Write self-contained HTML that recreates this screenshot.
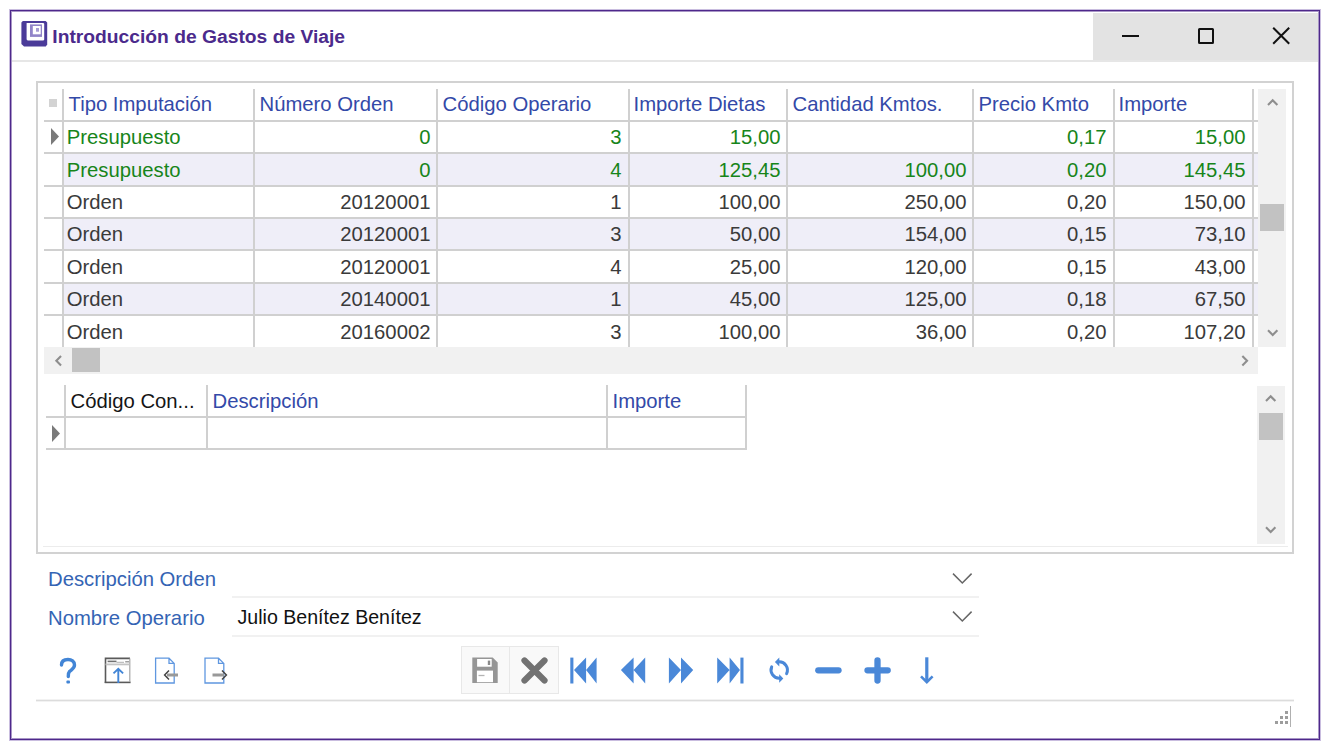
<!DOCTYPE html>
<html><head><meta charset="utf-8"><style>
html,body{margin:0;padding:0;background:#fff;width:1327px;height:745px;overflow:hidden;position:relative}
.t{position:absolute;font-family:"Liberation Sans",sans-serif;white-space:nowrap}
.r{position:absolute;display:block}
</style></head><body>
<div class="r" style="left:9px;top:9px;width:1312px;height:732px;box-sizing:border-box;border:1px solid #c9bddf"></div>
<div class="r" style="left:10px;top:10px;width:1310px;height:730px;box-sizing:border-box;border:1px solid #4e288b"></div>
<div class="r" style="left:11px;top:11px;width:1308px;height:728px;box-sizing:border-box;border:1px solid #a896c6"></div>
<div class="r" style="left:1093px;top:13px;width:225px;height:48px;background:#e3e3e3;"></div>
<div class="r" style="left:12px;top:60px;width:1306px;height:2px;background:#e6e6e6;"></div>
<svg class="r" style="left:18px;top:18px" width="32" height="32" viewBox="0 0 32 32">
<path d="M4.8 3.0 H27.6 L29.2 4.6 V26.6 L27.8 28.6 H6.0 L3.4 26.0 V4.4 Z" fill="#4b3b99"/>
<path d="M8.6 5.0 H25.4 L26.2 5.8 V21.7 L25.4 22.5 H9.6 L8.6 21.5 Z" fill="#fff"/>
<rect x="12" y="6.4" width="12" height="12.5" fill="#9184c8"/>
<rect x="14.8" y="8" width="7.9" height="8.3" fill="#fff"/>
<rect x="18" y="10" width="3" height="3.7" fill="#a69cd3"/>
</svg>
<div class="t" style="left:52.30px;top:26.90px;font-size:19.25px;line-height:19.25px;color:#4b2a8c;font-weight:bold;">Introducción de Gastos de Viaje</div>
<div class="r" style="left:1122px;top:35px;width:17px;height:2px;background:#111;"></div>
<div class="r" style="left:1198px;top:27.5px;width:16px;height:16px;box-sizing:border-box;border:2px solid #111;border-radius:1.5px"></div>
<svg class="r" style="left:1270px;top:25px" width="22" height="22" viewBox="0 0 22 22"><path d="M3.2 2.8 L19.2 18.8 M19.2 2.8 L3.2 18.8" stroke="#111" stroke-width="2"/></svg>
<div class="r" style="left:36px;top:81px;width:1258px;height:473px;box-sizing:border-box;border:2px solid #d2d2d2"></div>
<div class="r" style="left:63px;top:154px;width:1195px;height:31px;background:#efeef8;"></div>
<div class="r" style="left:63px;top:219px;width:1195px;height:30px;background:#efeef8;"></div>
<div class="r" style="left:63px;top:284px;width:1195px;height:30px;background:#efeef8;"></div>
<div class="r" style="left:62px;top:89px;width:2px;height:258px;background:#d0d0d0;"></div>
<div class="r" style="left:253px;top:89px;width:2px;height:258px;background:#d0d0d0;"></div>
<div class="r" style="left:436px;top:89px;width:2px;height:258px;background:#d0d0d0;"></div>
<div class="r" style="left:628px;top:89px;width:2px;height:258px;background:#d0d0d0;"></div>
<div class="r" style="left:786px;top:89px;width:2px;height:258px;background:#d0d0d0;"></div>
<div class="r" style="left:972px;top:89px;width:2px;height:258px;background:#d0d0d0;"></div>
<div class="r" style="left:1113px;top:89px;width:2px;height:258px;background:#d0d0d0;"></div>
<div class="r" style="left:1252px;top:89px;width:2px;height:258px;background:#d0d0d0;"></div>
<div class="r" style="left:44px;top:120px;width:1214px;height:2px;background:#d0d0d0;"></div>
<div class="r" style="left:44px;top:152px;width:1214px;height:2px;background:#d0d0d0;"></div>
<div class="r" style="left:44px;top:185px;width:1214px;height:2px;background:#d0d0d0;"></div>
<div class="r" style="left:44px;top:217px;width:1214px;height:2px;background:#d0d0d0;"></div>
<div class="r" style="left:44px;top:249px;width:1214px;height:2px;background:#d0d0d0;"></div>
<div class="r" style="left:44px;top:282px;width:1214px;height:2px;background:#d0d0d0;"></div>
<div class="r" style="left:44px;top:314px;width:1214px;height:2px;background:#d0d0d0;"></div>
<div class="r" style="left:49px;top:99px;width:8px;height:8px;background:#d3d3d3;"></div>
<svg class="r" style="left:50px;top:127px" width="10" height="20" viewBox="0 0 10 20"><path d="M1 1 L9 9.5 L1 18 Z" fill="#7a7a7a"/></svg>
<div class="t" style="left:68.50px;top:94.12px;font-size:20.3px;line-height:20.3px;color:#3349a8;font-weight:normal;">Tipo Imputación</div>
<div class="t" style="left:259.50px;top:94.12px;font-size:20.3px;line-height:20.3px;color:#3349a8;font-weight:normal;">Número Orden</div>
<div class="t" style="left:442.50px;top:94.12px;font-size:20.3px;line-height:20.3px;color:#3349a8;font-weight:normal;">Código Operario</div>
<div class="t" style="left:633.50px;top:94.12px;font-size:20.3px;line-height:20.3px;color:#3349a8;font-weight:normal;">Importe Dietas</div>
<div class="t" style="left:792.50px;top:94.12px;font-size:20.3px;line-height:20.3px;color:#3349a8;font-weight:normal;">Cantidad Kmtos.</div>
<div class="t" style="left:978.50px;top:94.12px;font-size:20.3px;line-height:20.3px;color:#3349a8;font-weight:normal;">Precio Kmto</div>
<div class="t" style="left:1118.50px;top:94.12px;font-size:20.3px;line-height:20.3px;color:#3349a8;font-weight:normal;">Importe</div>
<div class="t" style="left:66.70px;top:127.22px;font-size:20.3px;line-height:20.3px;color:#17851a;font-weight:normal;">Presupuesto</div>
<div class="t" style="right:896.50px;top:127.22px;font-size:20.3px;line-height:20.3px;color:#17851a;font-weight:normal;text-align:right;">0</div>
<div class="t" style="right:705.50px;top:127.22px;font-size:20.3px;line-height:20.3px;color:#17851a;font-weight:normal;text-align:right;">3</div>
<div class="t" style="right:546.50px;top:127.22px;font-size:20.3px;line-height:20.3px;color:#17851a;font-weight:normal;text-align:right;">15,00</div>
<div class="t" style="right:220.50px;top:127.22px;font-size:20.3px;line-height:20.3px;color:#17851a;font-weight:normal;text-align:right;">0,17</div>
<div class="t" style="right:81.50px;top:127.22px;font-size:20.3px;line-height:20.3px;color:#17851a;font-weight:normal;text-align:right;">15,00</div>
<div class="t" style="left:66.70px;top:159.62px;font-size:20.3px;line-height:20.3px;color:#17851a;font-weight:normal;">Presupuesto</div>
<div class="t" style="right:896.50px;top:159.62px;font-size:20.3px;line-height:20.3px;color:#17851a;font-weight:normal;text-align:right;">0</div>
<div class="t" style="right:705.50px;top:159.62px;font-size:20.3px;line-height:20.3px;color:#17851a;font-weight:normal;text-align:right;">4</div>
<div class="t" style="right:546.50px;top:159.62px;font-size:20.3px;line-height:20.3px;color:#17851a;font-weight:normal;text-align:right;">125,45</div>
<div class="t" style="right:360.50px;top:159.62px;font-size:20.3px;line-height:20.3px;color:#17851a;font-weight:normal;text-align:right;">100,00</div>
<div class="t" style="right:220.50px;top:159.62px;font-size:20.3px;line-height:20.3px;color:#17851a;font-weight:normal;text-align:right;">0,20</div>
<div class="t" style="right:81.50px;top:159.62px;font-size:20.3px;line-height:20.3px;color:#17851a;font-weight:normal;text-align:right;">145,45</div>
<div class="t" style="left:66.70px;top:192.02px;font-size:20.3px;line-height:20.3px;color:#3a3a3a;font-weight:normal;">Orden</div>
<div class="t" style="right:896.50px;top:192.02px;font-size:20.3px;line-height:20.3px;color:#3a3a3a;font-weight:normal;text-align:right;">20120001</div>
<div class="t" style="right:705.50px;top:192.02px;font-size:20.3px;line-height:20.3px;color:#3a3a3a;font-weight:normal;text-align:right;">1</div>
<div class="t" style="right:546.50px;top:192.02px;font-size:20.3px;line-height:20.3px;color:#3a3a3a;font-weight:normal;text-align:right;">100,00</div>
<div class="t" style="right:360.50px;top:192.02px;font-size:20.3px;line-height:20.3px;color:#3a3a3a;font-weight:normal;text-align:right;">250,00</div>
<div class="t" style="right:220.50px;top:192.02px;font-size:20.3px;line-height:20.3px;color:#3a3a3a;font-weight:normal;text-align:right;">0,20</div>
<div class="t" style="right:81.50px;top:192.02px;font-size:20.3px;line-height:20.3px;color:#3a3a3a;font-weight:normal;text-align:right;">150,00</div>
<div class="t" style="left:66.70px;top:224.42px;font-size:20.3px;line-height:20.3px;color:#3a3a3a;font-weight:normal;">Orden</div>
<div class="t" style="right:896.50px;top:224.42px;font-size:20.3px;line-height:20.3px;color:#3a3a3a;font-weight:normal;text-align:right;">20120001</div>
<div class="t" style="right:705.50px;top:224.42px;font-size:20.3px;line-height:20.3px;color:#3a3a3a;font-weight:normal;text-align:right;">3</div>
<div class="t" style="right:546.50px;top:224.42px;font-size:20.3px;line-height:20.3px;color:#3a3a3a;font-weight:normal;text-align:right;">50,00</div>
<div class="t" style="right:360.50px;top:224.42px;font-size:20.3px;line-height:20.3px;color:#3a3a3a;font-weight:normal;text-align:right;">154,00</div>
<div class="t" style="right:220.50px;top:224.42px;font-size:20.3px;line-height:20.3px;color:#3a3a3a;font-weight:normal;text-align:right;">0,15</div>
<div class="t" style="right:81.50px;top:224.42px;font-size:20.3px;line-height:20.3px;color:#3a3a3a;font-weight:normal;text-align:right;">73,10</div>
<div class="t" style="left:66.70px;top:256.82px;font-size:20.3px;line-height:20.3px;color:#3a3a3a;font-weight:normal;">Orden</div>
<div class="t" style="right:896.50px;top:256.82px;font-size:20.3px;line-height:20.3px;color:#3a3a3a;font-weight:normal;text-align:right;">20120001</div>
<div class="t" style="right:705.50px;top:256.82px;font-size:20.3px;line-height:20.3px;color:#3a3a3a;font-weight:normal;text-align:right;">4</div>
<div class="t" style="right:546.50px;top:256.82px;font-size:20.3px;line-height:20.3px;color:#3a3a3a;font-weight:normal;text-align:right;">25,00</div>
<div class="t" style="right:360.50px;top:256.82px;font-size:20.3px;line-height:20.3px;color:#3a3a3a;font-weight:normal;text-align:right;">120,00</div>
<div class="t" style="right:220.50px;top:256.82px;font-size:20.3px;line-height:20.3px;color:#3a3a3a;font-weight:normal;text-align:right;">0,15</div>
<div class="t" style="right:81.50px;top:256.82px;font-size:20.3px;line-height:20.3px;color:#3a3a3a;font-weight:normal;text-align:right;">43,00</div>
<div class="t" style="left:66.70px;top:289.22px;font-size:20.3px;line-height:20.3px;color:#3a3a3a;font-weight:normal;">Orden</div>
<div class="t" style="right:896.50px;top:289.22px;font-size:20.3px;line-height:20.3px;color:#3a3a3a;font-weight:normal;text-align:right;">20140001</div>
<div class="t" style="right:705.50px;top:289.22px;font-size:20.3px;line-height:20.3px;color:#3a3a3a;font-weight:normal;text-align:right;">1</div>
<div class="t" style="right:546.50px;top:289.22px;font-size:20.3px;line-height:20.3px;color:#3a3a3a;font-weight:normal;text-align:right;">45,00</div>
<div class="t" style="right:360.50px;top:289.22px;font-size:20.3px;line-height:20.3px;color:#3a3a3a;font-weight:normal;text-align:right;">125,00</div>
<div class="t" style="right:220.50px;top:289.22px;font-size:20.3px;line-height:20.3px;color:#3a3a3a;font-weight:normal;text-align:right;">0,18</div>
<div class="t" style="right:81.50px;top:289.22px;font-size:20.3px;line-height:20.3px;color:#3a3a3a;font-weight:normal;text-align:right;">67,50</div>
<div class="t" style="left:66.70px;top:321.62px;font-size:20.3px;line-height:20.3px;color:#3a3a3a;font-weight:normal;">Orden</div>
<div class="t" style="right:896.50px;top:321.62px;font-size:20.3px;line-height:20.3px;color:#3a3a3a;font-weight:normal;text-align:right;">20160002</div>
<div class="t" style="right:705.50px;top:321.62px;font-size:20.3px;line-height:20.3px;color:#3a3a3a;font-weight:normal;text-align:right;">3</div>
<div class="t" style="right:546.50px;top:321.62px;font-size:20.3px;line-height:20.3px;color:#3a3a3a;font-weight:normal;text-align:right;">100,00</div>
<div class="t" style="right:360.50px;top:321.62px;font-size:20.3px;line-height:20.3px;color:#3a3a3a;font-weight:normal;text-align:right;">36,00</div>
<div class="t" style="right:220.50px;top:321.62px;font-size:20.3px;line-height:20.3px;color:#3a3a3a;font-weight:normal;text-align:right;">0,20</div>
<div class="t" style="right:81.50px;top:321.62px;font-size:20.3px;line-height:20.3px;color:#3a3a3a;font-weight:normal;text-align:right;">107,20</div>
<div class="r" style="left:1258px;top:89px;width:28px;height:258px;background:#f1f1f1;"></div>
<div class="r" style="left:1260px;top:204px;width:24px;height:27px;background:#c2c2c2;"></div>
<div class="r" style="left:44px;top:347px;width:1214px;height:27px;background:#f1f1f1;"></div>
<div class="r" style="left:72px;top:348px;width:28px;height:24px;background:#c2c2c2;"></div>
<svg class="r" style="left:1264.5px;top:95.1px" width="15.4" height="15.4" viewBox="-7.7 -7.7 15.4 15.4"><path d="M-4.7 2.35 L0 -2.35 L4.7 2.35" fill="none" stroke="#8e8e8e" stroke-width="2.1"/></svg>
<svg class="r" style="left:1264.6px;top:324.8px" width="15.4" height="15.4" viewBox="-7.7 -7.7 15.4 15.4"><path d="M-4.7 -2.35 L0 2.35 L4.7 -2.35" fill="none" stroke="#8e8e8e" stroke-width="2.1"/></svg>
<svg class="r" style="left:50.5px;top:352.8px" width="15.4" height="15.4" viewBox="-7.7 -7.7 15.4 15.4"><path d="M2.35 -4.7 L-2.35 0 L2.35 4.7" fill="none" stroke="#8e8e8e" stroke-width="2.1"/></svg>
<svg class="r" style="left:1236.8px;top:352.8px" width="15.4" height="15.4" viewBox="-7.7 -7.7 15.4 15.4"><path d="M-2.35 -4.7 L2.35 0 L-2.35 4.7" fill="none" stroke="#8e8e8e" stroke-width="2.1"/></svg>
<div class="r" style="left:64px;top:385px;width:2px;height:64px;background:#d0d0d0;"></div>
<div class="r" style="left:206px;top:385px;width:2px;height:64px;background:#d0d0d0;"></div>
<div class="r" style="left:606px;top:385px;width:2px;height:64px;background:#d0d0d0;"></div>
<div class="r" style="left:745px;top:385px;width:2px;height:64px;background:#d0d0d0;"></div>
<div class="r" style="left:46px;top:416px;width:701px;height:2px;background:#d0d0d0;"></div>
<div class="r" style="left:46px;top:448px;width:701px;height:2px;background:#d0d0d0;"></div>
<svg class="r" style="left:51px;top:424px" width="10" height="20" viewBox="0 0 10 20"><path d="M1 1 L9 9.5 L1 18 Z" fill="#7a7a7a"/></svg>
<div class="t" style="left:70.50px;top:390.82px;font-size:20.3px;line-height:20.3px;color:#151515;font-weight:normal;">Código Con...</div>
<div class="t" style="left:212.50px;top:390.82px;font-size:20.3px;line-height:20.3px;color:#3349a8;font-weight:normal;">Descripción</div>
<div class="t" style="left:612.50px;top:390.82px;font-size:20.3px;line-height:20.3px;color:#3349a8;font-weight:normal;">Importe</div>
<div class="r" style="left:1257px;top:386px;width:28px;height:158px;background:#f1f1f1;"></div>
<div class="r" style="left:1259px;top:413px;width:24px;height:27px;background:#c2c2c2;"></div>
<svg class="r" style="left:1263.3px;top:391.3px" width="15.4" height="15.4" viewBox="-7.7 -7.7 15.4 15.4"><path d="M-4.7 2.35 L0 -2.35 L4.7 2.35" fill="none" stroke="#8e8e8e" stroke-width="2.1"/></svg>
<svg class="r" style="left:1263.3px;top:522.3px" width="15.4" height="15.4" viewBox="-7.7 -7.7 15.4 15.4"><path d="M-4.7 -2.35 L0 2.35 L4.7 -2.35" fill="none" stroke="#8e8e8e" stroke-width="2.1"/></svg>
<div class="r" style="left:43px;top:546px;width:1245px;height:1px;background:#ececec;"></div>
<div class="t" style="left:48.00px;top:568.82px;font-size:20.3px;line-height:20.3px;color:#3464b4;font-weight:normal;">Descripción Orden</div>
<div class="t" style="left:48.00px;top:607.82px;font-size:20.3px;line-height:20.3px;color:#3464b4;font-weight:normal;">Nombre Operario</div>
<div class="r" style="left:232px;top:596px;width:747px;height:2px;background:#f1f1f1;"></div>
<div class="r" style="left:232px;top:635px;width:747px;height:2px;background:#f1f1f1;"></div>
<div class="t" style="left:237.50px;top:608.41px;font-size:19.6px;line-height:19.6px;color:#111;font-weight:normal;">Julio Benítez Benítez</div>
<svg class="r" style="left:950.1px;top:565.7px" width="24.6" height="24.6" viewBox="-12.3 -12.3 24.6 24.6"><path d="M-9.3 -4.65 L0 4.65 L9.3 -4.65" fill="none" stroke="#666" stroke-width="1.5"/></svg>
<svg class="r" style="left:950.1px;top:604.3000000000001px" width="24.6" height="24.6" viewBox="-12.3 -12.3 24.6 24.6"><path d="M-9.3 -4.65 L0 4.65 L9.3 -4.65" fill="none" stroke="#666" stroke-width="1.5"/></svg>
<div class="r" style="left:36px;top:699px;width:1258px;height:3px;background:#f2f2f2;"></div>
<div class="r" style="left:36px;top:700px;width:1258px;height:1px;background:#dcdcdc;"></div>
<svg class="r" style="left:56px;top:656px" width="24" height="32" viewBox="0 0 24 32"><path d="M5.5 9 C5.5 5 8.5 3.5 12 3.5 C15.5 3.5 18.5 5.5 18.5 9 C18.5 12.5 15.5 13.5 13.5 15.5 C12.3 16.7 12.3 18 12.3 20.5" fill="none" stroke="#4285d6" stroke-width="3.4" stroke-linecap="round"/><rect x="10.4" y="24.4" width="3.6" height="3.2" rx="1" fill="#4285d6"/></svg>
<svg class="r" style="left:104px;top:657px" width="28" height="28" viewBox="0 0 28 28"><path d="M1.5 26 V1.4 H26" fill="none" stroke="#5a5a5a" stroke-width="1.6"/><path d="M0.7 25.4 H26.6" stroke="#5a5a5a" stroke-width="1.6"/><path d="M25.8 1.4 V25" stroke="#a5a5a5" stroke-width="1.2"/><path d="M3.6 4.4 H12.5" stroke="#707070" stroke-width="1.6"/><path d="M12.5 5.3 H20" stroke="#9a9a9a" stroke-width="0.8"/><path d="M21.2 4.8 H25" stroke="#8a8a8a" stroke-width="1.2"/><path d="M1.5 7.4 H25.5" stroke="#c4c4c4" stroke-width="1.8"/><path d="M14.3 26 V12.3 M9.5 16.4 L14.3 11.8 L19.1 16.4" fill="none" stroke="#4285d6" stroke-width="1.9"/></svg>
<svg class="r" style="left:154px;top:657px" width="28" height="28" viewBox="0 0 28 28"><path d="M1.6 1.2 H15 L20.2 6.4 V26 H1.6 Z M15 1.2 V6.4 H20.2" fill="none" stroke="#5f97e0" stroke-width="1.3"/><path d="M13 18 H24" stroke="#999" stroke-width="3"/><path d="M15 13.5 L10.6 18 L15 22.5" fill="none" stroke="#444" stroke-width="1.5"/></svg>
<svg class="r" style="left:204px;top:657px" width="28" height="28" viewBox="0 0 28 28"><path d="M1.0 1.2 H14.5 L19.8 6.4 V26 H1.0 Z M14.5 1.2 V6.4 H19.8" fill="none" stroke="#5f97e0" stroke-width="1.3"/><path d="M8.5 18 H20" stroke="#999" stroke-width="3"/><path d="M18 13.5 L22.4 18 L18 22.5" fill="none" stroke="#444" stroke-width="1.5"/></svg>
<div class="r" style="left:461px;top:646px;width:49px;height:48px;box-sizing:border-box;background:#f9f9f9;border:1.5px solid #e8e8e8"></div>
<div class="r" style="left:509px;top:646px;width:50px;height:48px;box-sizing:border-box;background:#f9f9f9;border:1.5px solid #e8e8e8"></div>
<svg class="r" style="left:472px;top:657px" width="27" height="27" viewBox="0 0 27 27"><path d="M0.3 0.5 H20.7 L25.7 5.5 V26 H0.3 Z" fill="#969696"/><rect x="5.1" y="2.0" width="14.6" height="7.7" fill="#fff"/><rect x="4.9" y="13.6" width="16.1" height="11.6" fill="#fff"/><rect x="15.8" y="3.6" width="2.4" height="4.4" fill="#8a8a8a"/><path d="M6.5 18.5 H12.5" stroke="#b4b4b4" stroke-width="1.3"/></svg>
<svg class="r" style="left:519px;top:655px" width="31" height="31" viewBox="0 0 31 31"><path d="M5.5 5.5 L25.5 25.5 M25.5 5.5 L5.5 25.5" stroke="#727272" stroke-width="6.2" stroke-linecap="round"/></svg>
<svg class="r" style="left:570px;top:657px" width="30" height="27" viewBox="0 0 30 27"><rect x="0.3" y="0.6" width="3.1" height="25.9" fill="#4a88d8"/><path d="M4 13 L16.1 0.6 V26.5 Z M16.1 13 L26.6 0.6 V26.5 Z" fill="#4a88d8"/></svg>
<svg class="r" style="left:620px;top:657px" width="30" height="27" viewBox="0 0 30 27"><path d="M0.9 13 L13.6 0.6 V26.5 Z M13.6 13 L25.2 0.6 V26.5 Z" fill="#4a88d8"/></svg>
<svg class="r" style="left:668px;top:657px" width="30" height="27" viewBox="0 0 30 27"><path d="M0.9 0.6 V26.5 L13 13 Z M13 0.6 V26.5 L25.2 13 Z" fill="#4a88d8"/></svg>
<svg class="r" style="left:717px;top:657px" width="30" height="27" viewBox="0 0 30 27"><path d="M0.2 0.6 V26.5 L12.6 13 Z M12.6 0.6 V26.5 L23 13 Z" fill="#4a88d8"/><rect x="23.4" y="0.6" width="3.1" height="25.9" fill="#4a88d8"/></svg>
<svg class="r" style="left:760px;top:650px" width="40" height="40" viewBox="0 0 40 40"><path d="M18.5 11.9 A8.2 8.2 0 0 1 26.6 23.6" fill="none" stroke="#4a88d8" stroke-width="3" stroke-linecap="round"/><path d="M14.9 12.1 L19.3 7.6 L19.3 16.6 Z" fill="#4a88d8"/><path d="M11.7 16.8 A8.2 8.2 0 0 0 19.5 28.2" fill="none" stroke="#4a88d8" stroke-width="3" stroke-linecap="round"/><path d="M23.3 28.6 L19.2 24.2 L19.2 32.8 Z" fill="#4a88d8"/></svg>
<svg class="r" style="left:812px;top:664px" width="33" height="13" viewBox="0 0 33 13"><path d="M6.3 6.3 H26.5" stroke="#4a88d8" stroke-width="6.3" stroke-linecap="round"/></svg>
<svg class="r" style="left:862px;top:655px" width="32" height="32" viewBox="0 0 32 32"><path d="M5.5 15.3 H25.7 M15.5 5.3 V25.5" stroke="#4a88d8" stroke-width="6.3" stroke-linecap="round"/></svg>
<svg class="r" style="left:917px;top:656px" width="20" height="30" viewBox="0 0 20 30"><path d="M9.8 1.3 V25.5" stroke="#4a88d8" stroke-width="3.2"/><path d="M4.0 20.4 L9.8 26.2 L15.6 20.4" fill="none" stroke="#4a88d8" stroke-width="2.6"/></svg>
<div class="r" style="left:1285px;top:711px;width:3px;height:3px;background:#9d9d9d;"></div>
<div class="r" style="left:1280px;top:716px;width:3px;height:3px;background:#9d9d9d;"></div>
<div class="r" style="left:1285px;top:716px;width:3px;height:3px;background:#9d9d9d;"></div>
<div class="r" style="left:1275px;top:721px;width:3px;height:3px;background:#9d9d9d;"></div>
<div class="r" style="left:1280px;top:721px;width:3px;height:3px;background:#9d9d9d;"></div>
<div class="r" style="left:1285px;top:721px;width:3px;height:3px;background:#9d9d9d;"></div>
<div class="r" style="left:1290px;top:706px;width:1px;height:21px;background:#b0b0b0;"></div>
</body></html>
